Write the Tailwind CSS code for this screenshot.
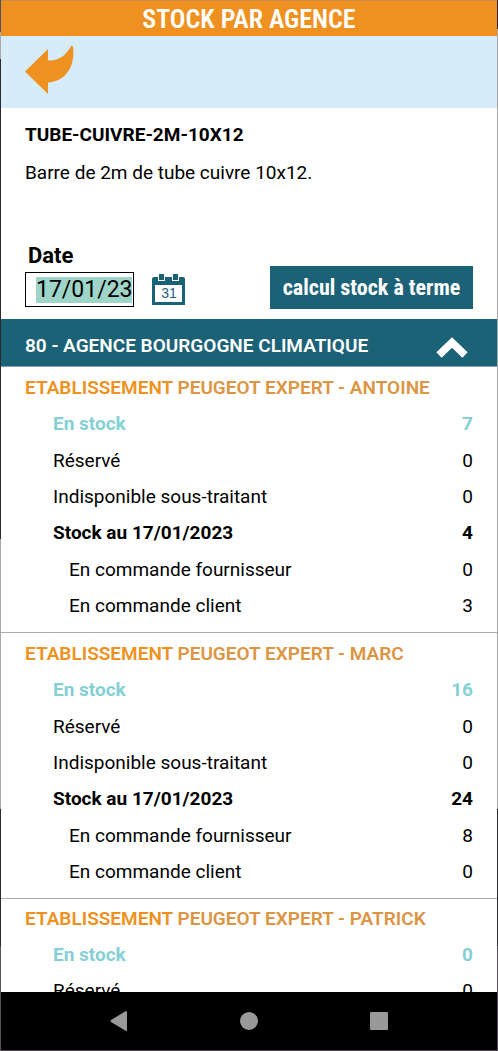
<!DOCTYPE html>
<html lang="fr">
<head>
<meta charset="utf-8">
<meta name="viewport" content="width=device-width, initial-scale=1">
<title>Stock par agence</title>
<script src="https://cdn.jsdelivr.net/npm/@tailwindcss/browser@4"></script>
</head>
<body class="flex h-screen overflow-hidden bg-white font-['Roboto',sans-serif] text-[19px] leading-6 text-black">
<div class="w-px shrink-0 bg-[linear-gradient(#4b5563_3%,#a8a8a8_3%_5.6%,#2b2b2e_5.6%_51.3%,#a8a8a8_51.3%_77%,#2b2b2e_77%_90%,#57535a_90%)]"></div>
<div class="flex min-w-0 grow flex-col">
  <header class="shrink-0">
    <h1 class="flex h-9 items-center justify-center border-t border-[#c98b45] bg-[#ee9121] font-['Roboto_Condensed','Roboto',sans-serif] text-[26px] font-semibold text-white">STOCK PAR AGENCE</h1>
    <div class="flex h-[72px] items-start bg-[#d6ecf9] px-6 pt-2">
      <button type="button" aria-label="Retour">
        <svg class="block h-[52px] w-[50px]" viewBox="0 0 50 52" fill="#ee9121" aria-hidden="true"><path d="M0 27.500 23 5V16.500C34 17 41 11 45.500 3Q47 .5 48 3C50.500 22 41 37 23 38.500V50Z"/></svg>
      </button>
    </div>
  </header>
  <main class="flex min-h-0 grow flex-col overflow-hidden">
    <section class="shrink-0 px-6 pt-[15px]">
      <h2 class="font-bold">TUBE-CUIVRE-2M-10X12</h2>
      <p class="mt-[14px]">Barre de 2m de tube cuivre 10x12.</p>
    </section>
    <form class="flex shrink-0 items-end px-6 pt-[57px] pb-[10px]">
      <div>
        <label for="date" class="ml-[3px] block text-[22px] leading-7 font-bold">Date</label>
        <div class="mt-[2px] mb-[2px] flex h-[35px] w-[109px] items-center border border-black pr-px pl-[10px]">
          <input id="date" type="text" value="17/01/23" class="h-[26px] w-full bg-[#9fd5c8] text-[23px] leading-[26px] outline-none">
        </div>
      </div>
      <button type="button" aria-label="Choisir une date" class="mb-1 ml-[17px]">
        <svg class="block h-8 w-9" viewBox="0 0 36 32" aria-hidden="true"><path fill="#1c6277" d="M3 4H32Q34 4 34 6V32H1V6Q1 4 3 4Z"/><path fill="#fff" d="M4 12H31V29H4ZM7 2H14V8H7ZM21 2H28V8H21Z"/><path fill="#1c6277" d="M8 1H13V7H8ZM22 1H27V7H22Z"/><text x="18" y="25" text-anchor="middle" font-family="Liberation Sans, sans-serif" font-size="14" fill="#1c6277">31</text></svg>
      </button>
      <button type="button" class="ml-auto h-[43px] w-[203px] bg-[#1c6277] font-['Roboto_Condensed','Roboto',sans-serif] text-[22px] font-bold text-white">calcul stock à terme</button>
    </form>
    <button type="button" aria-expanded="true" class="flex h-12 shrink-0 items-center justify-between border-b border-[#8aa0a8] bg-[#1c6277] pt-1.5 pr-[27px] pl-6 text-left font-semibold text-white">
      <span>80 - AGENCE BOURGOGNE CLIMATIQUE</span>
      <svg class="mt-1 h-6 w-9" viewBox="0 0 36 24" fill="none" stroke="#fff" stroke-width="7.500" aria-hidden="true"><path d="M5 19 18 6.500 31 19"/></svg>
    </button>

    <section class="flex h-[266px] shrink-0 flex-col justify-between border-b border-[#aaa] pt-[3px] pr-6 pb-2 pl-6">
      <h3 class="leading-9 font-semibold text-[#dc9543]"><span class="text-[#ee9121]">ETABLISSEMENT</span> PEUGEOT EXPERT - ANTOINE</h3>
      <dl class="contents">
        <div class="flex justify-between pl-7 leading-9 font-bold text-[#84d0d5]"><dt>En stock</dt><dd>7</dd></div>
        <div class="flex justify-between pl-7 leading-9"><dt>Réservé</dt><dd>0</dd></div>
        <div class="flex justify-between pl-7 leading-9"><dt>Indisponible sous-traitant</dt><dd>0</dd></div>
        <div class="flex justify-between pl-7 leading-9 font-bold"><dt>Stock au 17/01/2023</dt><dd>4</dd></div>
        <div class="flex justify-between pl-11 leading-9"><dt>En commande fournisseur</dt><dd>0</dd></div>
        <div class="flex justify-between pl-11 leading-9"><dt>En commande client</dt><dd>3</dd></div>
      </dl>
    </section>
    <section class="flex h-[266px] shrink-0 flex-col justify-between border-b border-[#aaa] pt-[3px] pr-6 pb-2 pl-6">
      <h3 class="leading-9 font-semibold text-[#dc9543]"><span class="text-[#ee9121]">ETABLISSEMENT</span> PEUGEOT EXPERT - MARC</h3>
      <dl class="contents">
        <div class="flex justify-between pl-7 leading-9 font-bold text-[#84d0d5]"><dt>En stock</dt><dd>16</dd></div>
        <div class="flex justify-between pl-7 leading-9"><dt>Réservé</dt><dd>0</dd></div>
        <div class="flex justify-between pl-7 leading-9"><dt>Indisponible sous-traitant</dt><dd>0</dd></div>
        <div class="flex justify-between pl-7 leading-9 font-bold"><dt>Stock au 17/01/2023</dt><dd>24</dd></div>
        <div class="flex justify-between pl-11 leading-9"><dt>En commande fournisseur</dt><dd>8</dd></div>
        <div class="flex justify-between pl-11 leading-9"><dt>En commande client</dt><dd>0</dd></div>
      </dl>
    </section>
    <section class="shrink-0 px-6 pt-[2px]">
      <h3 class="leading-9 font-semibold text-[#dc9543]"><span class="text-[#ee9121]">ETABLISSEMENT</span> PEUGEOT EXPERT - PATRICK</h3>
      <dl>
        <div class="flex justify-between pl-7 leading-9 font-bold text-[#84d0d5]"><dt>En stock</dt><dd>0</dd></div>
        <div class="flex justify-between pl-7 leading-9"><dt>Réservé</dt><dd>0</dd></div>
      </dl>
    </section>
  </main>
  <nav aria-label="Navigation système" class="flex h-[59px] shrink-0 items-center justify-center gap-[106px] border-b border-[#4a464c] bg-black">
    <button type="button" aria-label="Précédent"><svg class="block size-6" viewBox="0 0 24 24" fill="#999" aria-hidden="true"><path d="M20 3V21Q20 22.500 18.500 21.700L4 13Q3 12 4 11L18.500 2.300Q20 1.500 20 3Z"/></svg></button>
    <button type="button" aria-label="Accueil"><svg class="block size-6" viewBox="0 0 24 24" fill="#999" aria-hidden="true"><circle cx="12" cy="12" r="9"/></svg></button>
    <button type="button" aria-label="Applications récentes"><svg class="block size-6" viewBox="0 0 24 24" fill="#999" aria-hidden="true"><rect x="3" y="3" width="18" height="18" rx="1"/></svg></button>
  </nav>
</div>
<div class="w-px shrink-0 bg-[linear-gradient(#2b2b2e_2.8%,#a8a8a8_2.800%_77%,#2b2b2e_77%_90%,#57535a_90%)]"></div>
</body>
</html>
